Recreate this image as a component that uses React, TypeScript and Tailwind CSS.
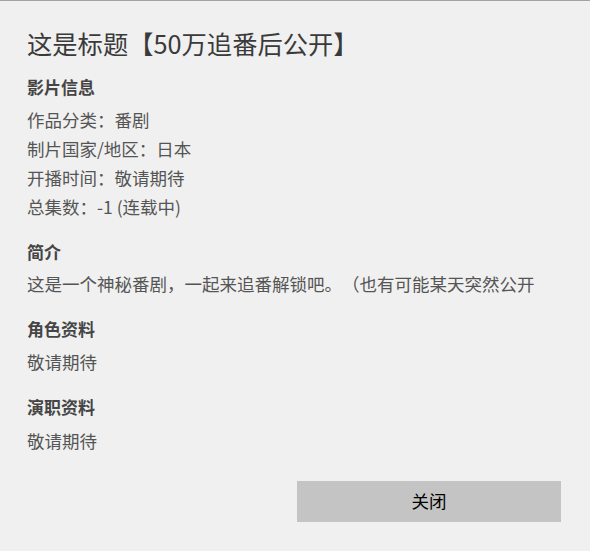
import React from 'react'

const sections = [
  {
    title: '影片信息',
    lines: ['作品分类：番剧', '制片国家/地区：日本', '开播时间：敬请期待', '总集数：-1 (连载中)'],
    top: '',
    gap: 'mt-[4px]',
  },
  { title: '简介', lines: ['这是一个神秘番剧，一起来追番解锁吧。（也有可能某天突然公开'], top: 'mt-[16px]', gap: 'mt-[3px]' },
  { title: '角色资料', lines: ['敬请期待'], top: 'mt-[16px]', gap: 'mt-[4px]' },
  { title: '演职资料', lines: ['敬请期待'], top: 'mt-[16px]', gap: 'mt-[5px]' },
]

export default function App() {
  return (
    <div
      className="flex h-[551px] w-[590px] flex-col border-t border-[#a3a3a3] bg-[#f0f0f0] pl-[27px] pt-[25px] [text-spacing-trim:space-all]"
      style={{ fontFamily: '"Noto Sans CJK SC", "Noto Sans", sans-serif' }}
    >
      <h1 className="h-[34px] text-[25.3px] leading-[34px] text-[#3a3a3a]">这是标题【50万追番后公开】</h1>
      <div className="mt-[12px] flex flex-col">
        {sections.map((s) => (
          <div key={s.title} className={s.top}>
            <h2 className="h-[29px] text-[17px] font-bold leading-[29px] text-[#454545]">{s.title}</h2>
            <div className={s.gap}>
              {s.lines.map((l) => (
                <p key={l} className="h-[29px] whitespace-nowrap text-[17.5px] leading-[29px] text-[#555555]">
                  {l}
                </p>
              ))}
            </div>
          </div>
        ))}
      </div>
      <div className="mt-[26px] flex justify-end pr-[29px]">
        <button className="h-[41px] w-[264px] bg-[#c4c4c4] text-[17.5px] text-black">关闭</button>
      </div>
    </div>
  )
}
